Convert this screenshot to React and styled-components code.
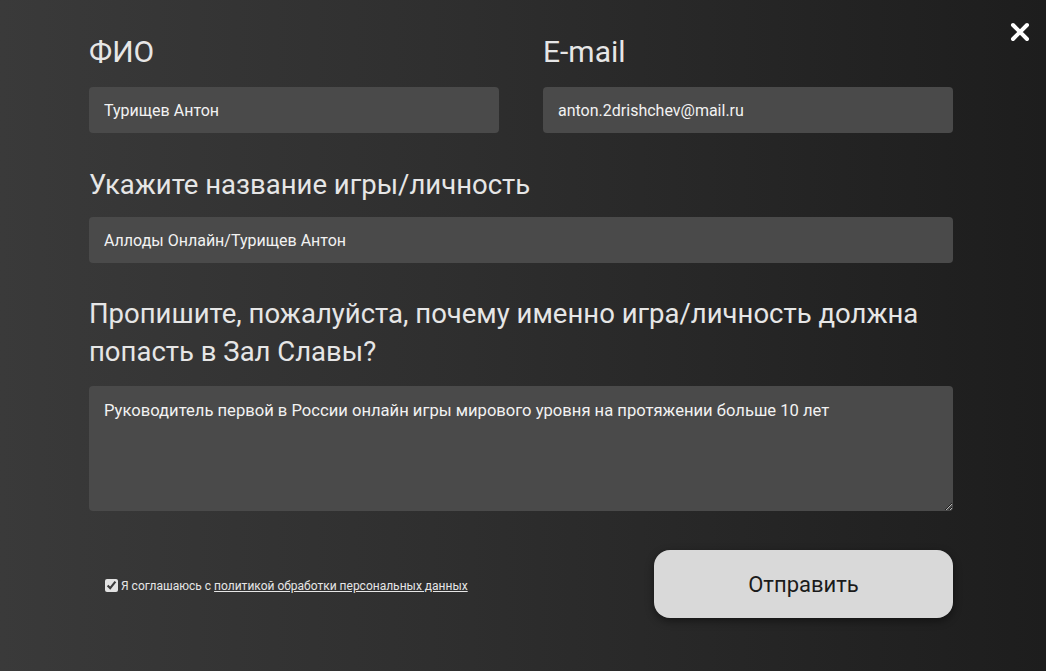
import React from "react";
import styled, { createGlobalStyle } from "styled-components";

const GlobalStyle = createGlobalStyle`
  html, body {
    margin: 0;
    padding: 0;
  }
  body {
    font-family: Roboto, "Noto Sans", sans-serif;
    background: #2c2c2c;
  }
`;

const Overlay = styled.div`
  position: relative;
  min-height: 671px;
  box-sizing: border-box;
  background: linear-gradient(to right, #3a3a3a 0%, #2e2e2e 45%, #1d1d1d 100%);
  padding: 33px 93px 0 89px;
`;

const CloseButton = styled.button`
  position: absolute;
  top: 18px;
  right: 12px;
  width: 28px;
  height: 28px;
  padding: 0;
  border: none;
  background: transparent;
  cursor: pointer;
  display: flex;
  align-items: center;
  justify-content: center;
`;

const Form = styled.form`
  width: 864px;
  display: flex;
  flex-direction: column;
`;

const Row = styled.div`
  display: grid;
  grid-template-columns: 1fr 1fr;
  column-gap: 44px;
`;

const Field = styled.div`
  display: flex;
  flex-direction: column;
  margin-bottom: ${(p) => p.$gap || 0}px;
`;

const Label = styled.label`
  color: #e6e6e6;
  font-size: ${(p) => p.$size || 27.5}px;
  line-height: 38px;
  margin-bottom: ${(p) => p.$mb || 16}px;
`;

const Input = styled.input`
  box-sizing: border-box;
  height: 46px;
  border: none;
  border-radius: 4px;
  background: #4a4a4a;
  color: #f2f2f2;
  font-family: inherit;
  font-size: 16px;
  padding: 0 15px;
  outline: none;
`;

const TextArea = styled.textarea`
  box-sizing: border-box;
  height: 125px;
  border: none;
  border-radius: 4px;
  background: #4a4a4a;
  color: #f2f2f2;
  font-family: inherit;
  font-size: 16.6px;
  line-height: 20px;
  padding: 15px 15px;
  outline: none;
  resize: vertical;
`;

const Footer = styled.div`
  display: flex;
  align-items: center;
  justify-content: space-between;
  margin-top: 39px;
`;

const Agree = styled.label`
  display: flex;
  align-items: center;
  gap: 3px;
  padding-left: 16px;
  color: #e6e6e6;
  font-size: 12px;
  margin-top: 3px;

  input {
    margin: 0;
    width: 13px;
    height: 13px;
    accent-color: #e2e2e2;
  }

  a {
    color: #e6e6e6;
    text-decoration: underline;
  }
`;

const Submit = styled.button`
  width: 299px;
  height: 68px;
  border: none;
  border-radius: 16px;
  background: #d9d9d9;
  color: #1b1b1b;
  font-family: inherit;
  font-size: 22px;
  box-shadow: 0 3px 8px rgba(0, 0, 0, 0.45);
  cursor: pointer;
`;

const CloseIcon = () => (
  <svg width="20" height="20" viewBox="0 0 20 20">
    <path d="M3 3 L17 17 M17 3 L3 17" stroke="#ffffff" strokeWidth="4" strokeLinecap="round" />
  </svg>
);

export default function App() {
  return (
    <>
      <GlobalStyle />
      <Overlay>
        <CloseButton type="button" aria-label="Закрыть">
          <CloseIcon />
        </CloseButton>
        <Form onSubmit={(e) => e.preventDefault()}>
          <Row>
            <Field $gap={33}>
              <Label $size={30} $mb={16}>ФИО</Label>
              <Input defaultValue="Турищев Антон" />
            </Field>
            <Field $gap={33}>
              <Label $size={30} $mb={16}>E-mail</Label>
              <Input defaultValue="anton.2drishchev@mail.ru" />
            </Field>
          </Row>
          <Field $gap={32}>
            <Label $mb={13}>Укажите название игры/личность</Label>
            <Input defaultValue="Аллоды Онлайн/Турищев Антон" />
          </Field>
          <Field>
            <Label $mb={15}>
              Пропишите, пожалуйста, почему именно игра/личность должна попасть в Зал Славы?
            </Label>
            <TextArea defaultValue="Руководитель первой в России онлайн игры мирового уровня на протяжении больше 10 лет" />
          </Field>
          <Footer>
            <Agree>
              <input type="checkbox" defaultChecked />
              <span>
                Я соглашаюсь с <a href="#policy">политикой обработки персональных данных</a>
              </span>
            </Agree>
            <Submit type="submit">Отправить</Submit>
          </Footer>
        </Form>
      </Overlay>
    </>
  );
}
